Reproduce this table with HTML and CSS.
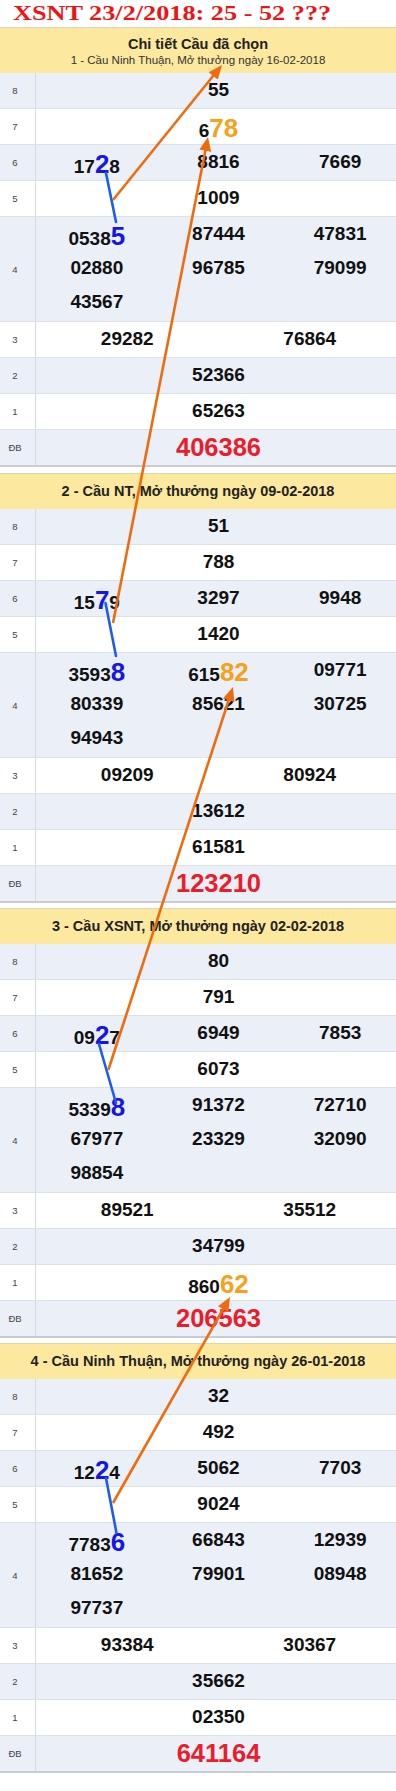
FILE: index.html
```html
<!DOCTYPE html>
<html lang="vi">
<head>
<meta charset="utf-8">
<title>XSNT 23/2/2018</title>
<link rel="stylesheet" href="styles.css">
</head>
<body>
<div class="page">
  <div class="title"><span class="title-text">XSNT 23/2/2018: 25 - 52 ???</span></div>

  <section class="sec sec-first">
    <div class="head head-main">
      <div class="head-t">Chi tiết Cầu đã chọn</div>
      <div class="head-s">1 - Cầu Ninh Thuận, Mở thưởng ngày 16-02-2018</div>
    </div>
    <div class="tbl">
      <div class="row alt"><div class="lbl">8</div><div class="vals c1"><div class="v">55</div></div></div>
      <div class="row"><div class="lbl">7</div><div class="vals c1"><div class="v sh">6<span class="ho">78</span></div></div></div>
      <div class="row alt"><div class="lbl">6</div><div class="vals c3"><div class="v sh">17<span class="hb">2</span>8</div><div class="v">8816</div><div class="v">7669</div></div></div>
      <div class="row"><div class="lbl">5</div><div class="vals c1"><div class="v">1009</div></div></div>
      <div class="row alt"><div class="lbl">4</div><div class="vals c3 big"><div class="v sh">0538<span class="hb">5</span></div><div class="v">87444</div><div class="v">47831</div><div class="v">02880</div><div class="v">96785</div><div class="v">79099</div><div class="v">43567</div></div></div>
      <div class="row"><div class="lbl">3</div><div class="vals c2"><div class="v">29282</div><div class="v">76864</div></div></div>
      <div class="row alt"><div class="lbl">2</div><div class="vals c1"><div class="v">52366</div></div></div>
      <div class="row"><div class="lbl">1</div><div class="vals c1"><div class="v">65263</div></div></div>
      <div class="row alt"><div class="lbl">ĐB</div><div class="vals c1"><div class="v db">406386</div></div></div>
    </div>
  </section>

  <section class="sec">
    <div class="head">2 - Cầu NT, Mở thưởng ngày 09-02-2018</div>
    <div class="tbl">
      <div class="row alt"><div class="lbl">8</div><div class="vals c1"><div class="v">51</div></div></div>
      <div class="row"><div class="lbl">7</div><div class="vals c1"><div class="v">788</div></div></div>
      <div class="row alt"><div class="lbl">6</div><div class="vals c3"><div class="v sh">15<span class="hb">7</span>9</div><div class="v">3297</div><div class="v">9948</div></div></div>
      <div class="row"><div class="lbl">5</div><div class="vals c1"><div class="v">1420</div></div></div>
      <div class="row alt"><div class="lbl">4</div><div class="vals c3 big"><div class="v sh">3593<span class="hb">8</span></div><div class="v sh">615<span class="ho">82</span></div><div class="v">09771</div><div class="v">80339</div><div class="v">85621</div><div class="v">30725</div><div class="v">94943</div></div></div>
      <div class="row"><div class="lbl">3</div><div class="vals c2"><div class="v">09209</div><div class="v">80924</div></div></div>
      <div class="row alt"><div class="lbl">2</div><div class="vals c1"><div class="v">13612</div></div></div>
      <div class="row"><div class="lbl">1</div><div class="vals c1"><div class="v">61581</div></div></div>
      <div class="row alt"><div class="lbl">ĐB</div><div class="vals c1"><div class="v db">123210</div></div></div>
    </div>
  </section>

  <section class="sec">
    <div class="head">3 - Cầu XSNT, Mở thưởng ngày 02-02-2018</div>
    <div class="tbl">
      <div class="row alt"><div class="lbl">8</div><div class="vals c1"><div class="v">80</div></div></div>
      <div class="row"><div class="lbl">7</div><div class="vals c1"><div class="v">791</div></div></div>
      <div class="row alt"><div class="lbl">6</div><div class="vals c3"><div class="v sh">09<span class="hb">2</span>7</div><div class="v">6949</div><div class="v">7853</div></div></div>
      <div class="row"><div class="lbl">5</div><div class="vals c1"><div class="v">6073</div></div></div>
      <div class="row alt"><div class="lbl">4</div><div class="vals c3 big"><div class="v sh">5339<span class="hb">8</span></div><div class="v">91372</div><div class="v">72710</div><div class="v">67977</div><div class="v">23329</div><div class="v">32090</div><div class="v">98854</div></div></div>
      <div class="row"><div class="lbl">3</div><div class="vals c2"><div class="v">89521</div><div class="v">35512</div></div></div>
      <div class="row alt"><div class="lbl">2</div><div class="vals c1"><div class="v">34799</div></div></div>
      <div class="row"><div class="lbl">1</div><div class="vals c1"><div class="v sh">860<span class="ho">62</span></div></div></div>
      <div class="row alt"><div class="lbl">ĐB</div><div class="vals c1"><div class="v db">206563</div></div></div>
    </div>
  </section>

  <section class="sec">
    <div class="head">4 - Cầu Ninh Thuận, Mở thưởng ngày 26-01-2018</div>
    <div class="tbl">
      <div class="row alt"><div class="lbl">8</div><div class="vals c1"><div class="v">32</div></div></div>
      <div class="row"><div class="lbl">7</div><div class="vals c1"><div class="v">492</div></div></div>
      <div class="row alt"><div class="lbl">6</div><div class="vals c3"><div class="v sh">12<span class="hb">2</span>4</div><div class="v">5062</div><div class="v">7703</div></div></div>
      <div class="row"><div class="lbl">5</div><div class="vals c1"><div class="v">9024</div></div></div>
      <div class="row alt"><div class="lbl">4</div><div class="vals c3 big"><div class="v sh">7783<span class="hb">6</span></div><div class="v">66843</div><div class="v">12939</div><div class="v">81652</div><div class="v">79901</div><div class="v">08948</div><div class="v">97737</div></div></div>
      <div class="row"><div class="lbl">3</div><div class="vals c2"><div class="v">93384</div><div class="v">30367</div></div></div>
      <div class="row alt"><div class="lbl">2</div><div class="vals c1"><div class="v">35662</div></div></div>
      <div class="row"><div class="lbl">1</div><div class="vals c1"><div class="v">02350</div></div></div>
      <div class="row alt"><div class="lbl">ĐB</div><div class="vals c1"><div class="v db">641164</div></div></div>
    </div>
  </section>

  <svg class="overlay" width="396" height="1791" viewBox="0 0 396 1791" xmlns="http://www.w3.org/2000/svg">
    <defs>
      <marker id="ah" viewBox="0 0 14 12" refX="4" refY="6" markerWidth="14" markerHeight="12" markerUnits="userSpaceOnUse" orient="auto">
        <path d="M0 0 L14 6 L0 12 Z" fill="#ef6c0e"/>
      </marker>
    </defs>
    <g stroke="#1d5cf0" stroke-width="2.6" stroke-linecap="round" fill="none">
      <line x1="106" y1="173" x2="116" y2="222"/>
      <line x1="105.5" y1="603" x2="116" y2="656"/>
      <line x1="99" y1="1044" x2="116" y2="1103"/>
      <line x1="106" y1="1478" x2="116.5" y2="1533"/>
    </g>
    <g stroke="#ef6c0e" stroke-width="2.6" fill="none" marker-end="url(#ah)">
      <line x1="113" y1="200" x2="215.7" y2="72.8"/>
      <line x1="113" y1="623" x2="206.1" y2="146.8"/>
      <line x1="108.3" y1="1070" x2="229.9" y2="696.5"/>
      <line x1="113" y1="1503" x2="225.1" y2="1305.7"/>
    </g>
  </svg>
</div>
</body>
</html>
```

FILE: styles.css
```css
html, body {
  margin: 0;
  padding: 0;
  background: #ffffff;
}

body {
  font-family: "Liberation Sans", Arial, sans-serif;
  color: #111;
}

.page {
  position: relative;
  width: 396px;
  height: 1791px;
  overflow: hidden;
}

.title {
  height: 27px;
  line-height: 27px;
  white-space: nowrap;
}

.title-text {
  display: inline-block;
  margin-left: 13px;
  font-family: "Liberation Serif", "Times New Roman", serif;
  font-weight: bold;
  font-size: 21px;
  color: #ee1414;
  transform: scaleX(1.25);
  transform-origin: 0 50%;
}

.sec {
  margin-bottom: 5px;
}

.sec-first {
  margin-bottom: 6px;
}

.head {
  width: 401px;
  box-sizing: border-box;
  border-top: 1px solid #dcd6b8;
  background: #fce89e;
  height: 36px;
  line-height: 35px;
  text-align: center;
  font-weight: bold;
  font-size: 14.5px;
  color: #222;
  white-space: nowrap;
  padding-right: 5px;
}

.head-main {
  height: 46px;
  line-height: normal;
  padding-top: 8px;
}

.head-t {
  font-size: 14.5px;
  line-height: 17px;
  font-weight: bold;
  color: #222;
}

.head-s {
  font-size: 11.5px;
  line-height: 14px;
  font-weight: normal;
  color: #333;
}

.tbl {
  width: 401px;
  border-bottom: 2px solid #c9cdd3;
}

.row {
  display: grid;
  grid-template-columns: 36px 1fr;
  border-bottom: 1px solid #dde1e8;
  background: #ffffff;
}

.row:last-child {
  border-bottom: none;
}

.row.alt {
  background: #eaeff8;
}

.lbl {
  display: flex;
  align-items: center;
  justify-content: center;
  padding-right: 5px;
  border-right: 1px solid #d6dae1;
  font-size: 9.5px;
  color: #444;
}

.vals {
  display: grid;
  grid-auto-rows: 34px;
  padding-bottom: 1px;
}

.vals.big {
  padding-bottom: 2px;
}

.c1 { grid-template-columns: 1fr; }
.c2 { grid-template-columns: 1fr 1fr; }
.c3 { grid-template-columns: 1fr 1fr 1fr; }

.v {
  box-sizing: border-box;
  text-align: center;
  line-height: 34px;
  font-size: 19px;
  font-weight: bold;
  color: #111;
  white-space: nowrap;
}

.v.sh {
  padding-top: 5px;
}

.hb,
.ho {
  font-size: 26px;
  line-height: 1;
  font-weight: bold;
}

.hb {
  color: #1616e6;
}

.ho {
  color: #f7a11a;
}

.v.db {
  font-size: 25.5px;
  color: #ec1c2a;
}

.overlay {
  position: absolute;
  top: 0;
  left: 0;
  pointer-events: none;
}
```
